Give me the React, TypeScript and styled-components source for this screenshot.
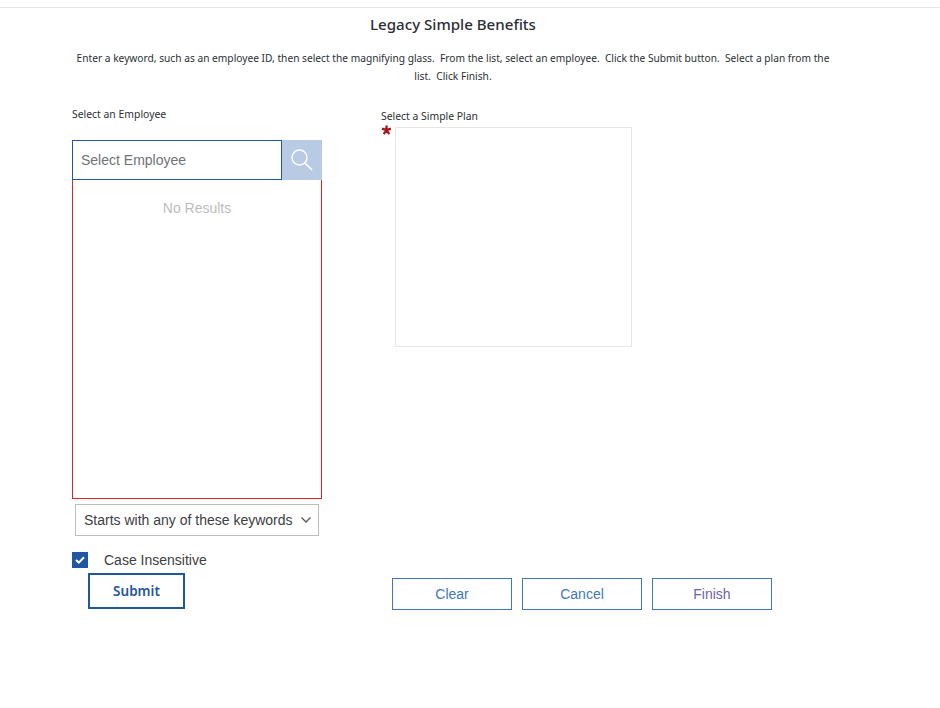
import React from "react";
import styled, { createGlobalStyle } from "styled-components";

const Global = createGlobalStyle`
  html, body { margin: 0; padding: 0; background: #fff; }
  body { font-family: "Liberation Sans", Arial, sans-serif; overflow: hidden; }
`;

const Page = styled.div`
  width: 940px;
  height: 708px;
  padding-top: 7px;
  box-sizing: border-box;
`;
const TopRule = styled.div`
  height: 1px;
  background: #e8e8e8;
`;
const Title = styled.h1`
  margin: 6px 0 0;
  width: 906px;
  text-align: center;
  font: 500 15.1px/20px "Noto Sans", sans-serif;
  color: #2b2f36;
`;
const Intro = styled.p`
  margin: 15px 0 0 72px;
  width: 762px;
  text-align: center;
  font: 400 10.2px/18px "Noto Sans", sans-serif;
  color: #2b2f36;
  white-space: pre-wrap;
`;
const Columns = styled.div`
  display: grid;
  grid-template-columns: 250px 391px;
  column-gap: 59px;
  margin: 22px 0 0 72px;
`;
const LeftColumn = styled.div`
  display: flex;
  flex-direction: column;
`;
const RightColumn = styled.div`
  display: flex;
  flex-direction: column;
  padding-top: 2px;
`;
const FieldLabel = styled.div`
  font: 400 10.4px/14px "Noto Sans", sans-serif;
  color: #2b2f36;
`;
const SearchRow = styled.div`
  display: flex;
  height: 40px;
  margin-top: 19px;
`;
const SearchInput = styled.input`
  flex: 1;
  min-width: 0;
  box-sizing: border-box;
  height: 40px;
  border: 1px solid #1f57a0;
  border-radius: 0;
  outline: none;
  padding: 0 8px;
  background: #fff;
  font: 14px "Liberation Sans", Arial, sans-serif;
  color: #333;
  &::placeholder { color: #6f7378; opacity: 1; }
`;
const SearchButton = styled.button`
  width: 40px;
  height: 40px;
  padding: 0;
  border: 0;
  background: #b9cbe4;
  display: flex;
  align-items: center;
  justify-content: center;
`;
const ResultList = styled.div`
  box-sizing: border-box;
  height: 319px;
  border: 1px solid #e0242a;
  border-top: 0;
  padding-top: 20px;
  text-align: center;
  font: 14px/16px "Liberation Sans", Arial, sans-serif;
  color: #bdbdbd;
`;
const SelectBox = styled.div`
  box-sizing: border-box;
  display: flex;
  align-items: center;
  justify-content: space-between;
  width: 244px;
  height: 32px;
  margin: 5px 0 0 3px;
  padding: 0 6px 0 8px;
  border: 1px solid #bdbdbd;
  font: 14px "Liberation Sans", Arial, sans-serif;
  color: #3c4043;
`;
const CheckRow = styled.label`
  display: flex;
  align-items: center;
  gap: 16px;
  height: 16px;
  margin-top: 16px;
  font: 14px/16px "Liberation Sans", Arial, sans-serif;
  color: #3c4043;
`;
const CheckBox = styled.span`
  width: 16px;
  height: 16px;
  background: #1f57a0;
  display: flex;
  align-items: center;
  justify-content: center;
`;
const SubmitButton = styled.button`
  box-sizing: border-box;
  width: 97px;
  height: 36px;
  margin: 5px 0 0 16px;
  padding: 0;
  background: #fff;
  border: 2px solid #1f57a0;
  font: 600 13.5px "Noto Sans", sans-serif;
  color: #1f57a0;
`;
const PlanRow = styled.div`
  display: flex;
  align-items: flex-start;
  margin-top: 4px;
`;
const Asterisk = styled.svg`
  width: 10px;
  height: 10px;
  margin: 0 4px 0 0;
  flex: none;
  position: relative;
  top: -2px;
`;
const PlanBox = styled.div`
  box-sizing: border-box;
  width: 237px;
  height: 220px;
  border: 1px solid #e6e6e6;
`;
const ActionBar = styled.div`
  display: flex;
  gap: 10px;
  margin: 231px 0 0 11px;
`;
const ActionButton = styled.button<{ $visited?: boolean }>`
  box-sizing: border-box;
  width: 120px;
  height: 32px;
  padding: 0;
  background: #fff;
  border: 1px solid #3f77bd;
  font: 14px "Liberation Sans", Arial, sans-serif;
  color: ${(p) => (p.$visited ? "#6f63ab" : "#3f77bd")};
`;

export default function App() {
  return (
    <Page>
      <Global />
      <TopRule />
      <Title>Legacy Simple Benefits</Title>
      <Intro>
        {"Enter a keyword, such as an employee ID, then select the magnifying glass.  From the list, select an employee.  Click the Submit button.  Select a plan from the list.  Click Finish."}
      </Intro>
      <Columns>
        <LeftColumn>
          <FieldLabel>Select an Employee</FieldLabel>
          <SearchRow>
            <SearchInput placeholder="Select Employee" readOnly />
            <SearchButton aria-label="Search">
              <svg width="24" height="24" viewBox="0 0 24 24" fill="none" stroke="#fff" strokeWidth="1.4">
                <circle cx="9.5" cy="9.5" r="7.5" />
                <path d="M15 15 L22 22" strokeWidth="1.6" />
              </svg>
            </SearchButton>
          </SearchRow>
          <ResultList>No Results</ResultList>
          <SelectBox>
            <span>Starts with any of these keywords</span>
            <svg width="12" height="8" viewBox="0 0 12 8" fill="none" stroke="#555" strokeWidth="1.3">
              <path d="M1.5 1.5 L6 6 L10.5 1.5" />
            </svg>
          </SelectBox>
          <CheckRow>
            <CheckBox>
              <svg width="10" height="8" viewBox="0 0 10 8" fill="none" stroke="#fff" strokeWidth="2">
                <path d="M1 4 L3.8 6.6 L9 1.2" />
              </svg>
            </CheckBox>
            Case Insensitive
          </CheckRow>
          <SubmitButton>Submit</SubmitButton>
        </LeftColumn>
        <RightColumn>
          <FieldLabel>Select a Simple Plan</FieldLabel>
          <PlanRow>
            <Asterisk viewBox="0 0 10 10" aria-hidden>
              <path d="M5.5 5.2 V0.5 M5.5 5.2 L10 3.7 M5.5 5.2 L8.3 9.2 M5.5 5.2 L2.7 9.2 M5.5 5.2 L1 3.7" stroke="#a5171c" strokeWidth="2.3" fill="none" />
            </Asterisk>
            <PlanBox />
          </PlanRow>
          <ActionBar>
            <ActionButton>Clear</ActionButton>
            <ActionButton>Cancel</ActionButton>
            <ActionButton $visited>Finish</ActionButton>
          </ActionBar>
        </RightColumn>
      </Columns>
    </Page>
  );
}
